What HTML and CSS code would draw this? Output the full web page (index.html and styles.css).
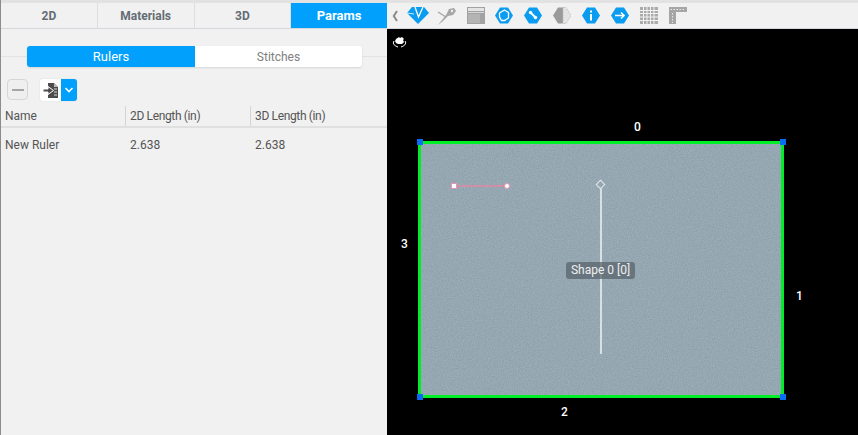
FILE: index.html
```html
<!DOCTYPE html>
<html lang="en">
<head>
  <meta charset="UTF-8">
  <title>Pattern Editor</title>
  <link rel="stylesheet" href="styles.css">
</head>
<body>
  <div class="app">
    <div class="side">
      <div class="tabs">
        <div class="tab">2D</div>
        <div class="tab">Materials</div>
        <div class="tab">3D</div>
        <div class="tab active">Params</div>
      </div>

      <div class="seg-row">
        <div class="seg">
          <div class="seg-item on">Rulers</div>
          <div class="seg-item">Stitches</div>
        </div>
      </div>

      <div class="tools">
        <button class="btn-minus"><span></span></button>
        <div class="split">
          <div class="split-icon">
            <svg width="16" height="17" viewBox="0 0 16 17">
              <path d="M5 1h6l4 4v11H5z" fill="#4c4c4c"/>
              <path d="M11 1l4 4h-4z" fill="#bbb"/>
              <path d="M11 7h3M11 10h3M11 13h3" stroke="#ddd"/>
              <path d="M0 7h5V4.500L10.500 8.500 5 12.500V10H0z" fill="#4c4c4c" stroke="#fff"/>
            </svg>
          </div>
          <div class="split-arrow">
            <svg width="10" height="8" viewBox="0 0 10 8"><path d="M1.500 2l3.500 3.500L8.500 2" fill="none" stroke="#fff" stroke-width="1.600"/></svg>
          </div>
        </div>
      </div>

      <div class="thead">
        <div class="col">Name</div>
        <div class="col">2D Length (in)</div>
        <div class="col">3D Length (in)</div>
      </div>
      <div class="trow">
        <div class="col">New Ruler</div>
        <div class="col">2.638</div>
        <div class="col">2.638</div>
      </div>
    </div>

    <div class="main">
      <div class="toolbar">
        <svg class="ti chev" width="6" height="12" viewBox="0 0 6 12"><path d="M5 1L1.800 6 5 11" fill="none" stroke="#8a8a8a" stroke-width="2"/></svg>
        <svg class="ti t-first" width="22" height="17" viewBox="0 0 22 17"><path d="M5 0h12l5 6-11 11L0 6z" fill="#0a9cf0"/><path d="M8 0l3.500 10L16 0" fill="none" stroke="#fff" stroke-width="1.300"/><path d="M0 6l7 1" stroke="#fff" stroke-width=".8"/></svg>
        <svg class="ti t-needle" width="20" height="18" viewBox="0 0 20 18"><path d="M1 18L9 8l3-6 5-1 2 3-3 4-5 1-5 5z" fill="#a6a6a6"/><path d="M1 5l8 5" stroke="#a6a6a6" stroke-width="1.400"/><circle cx="15" cy="4" r="1.200" fill="#f1f1f1"/></svg>
        <svg class="ti t-win" width="18" height="17" viewBox="0 0 18 17"><rect width="18" height="17" fill="#a2a2a2"/><rect y="1" x="1" width="16" height="3" fill="#e4e4e4"/><rect x="1" y="5" width="16" height="1" fill="#d8d8d8"/><rect x="1" y="7" width="12" height="9" fill="#b4b4b4"/></svg>
        <svg class="ti" width="18" height="17" viewBox="0 0 18 17"><path d="M5 .5h8l5 8-5 8H5l-5-8z" fill="#0a9cf0"/><path d="M4.500 6L9.500 3l4 2.500V11l-4 2.500H6.500L4.500 10z" fill="none" stroke="#fff" stroke-width="1.300"/></svg>
        <svg class="ti" width="18" height="17" viewBox="0 0 18 17"><path d="M5 .5h8l5 8-5 8H5l-5-8z" fill="#0a9cf0"/><path d="M7 6l4 4" stroke="#fff" stroke-width="2"/><circle cx="6.500" cy="5.500" r="1.700" fill="#fff"/><circle cx="11.500" cy="10.500" r="1.700" fill="#fff"/></svg>
        <svg class="ti" width="18" height="17" viewBox="0 0 18 17"><path d="M5 .5h5v16H5l-5-8z" fill="#9a9a9a"/><path d="M10 .5h3l5 8-5 8h-3z" fill="#e4e4e4" stroke="#bdbdbd" stroke-dasharray="1.500 1"/></svg>
        <svg class="ti" width="18" height="17" viewBox="0 0 18 17"><path d="M5 .5h8l5 8-5 8H5l-5-8z" fill="#0a9cf0"/><path d="M9 3.500v2M9 7v6.500" stroke="#fff" stroke-width="2"/></svg>
        <svg class="ti" width="18" height="17" viewBox="0 0 18 17"><path d="M5 .5h8l5 8-5 8H5l-5-8z" fill="#0a9cf0"/><path d="M4 8.500h9M10 5.500l3 3-3 3" fill="none" stroke="#fff" stroke-width="1.600"/></svg>
        <svg class="ti" width="18" height="17" viewBox="0 0 18 17"><rect width="18" height="17" fill="#ababab"/><path d="M3.500 0v17M7 0v17M10.500 0v17M14 0v17M0 3.500h18M0 6.500h18M0 10h18M0 13.500h18" stroke="#f1f1f1"/></svg>
        <svg class="ti" width="18" height="17" viewBox="0 0 18 17"><path d="M0 0h18v5H7v12H0z" fill="#a6a6a6"/><path d="M1.500 2.500h15M3.500 6v10" stroke="#e8e8e8" stroke-dasharray="1.500 1.500"/></svg>
      </div>

      <div class="canvas">
        <svg class="logo" width="15" height="12" viewBox="0 0 15 12">
          <path d="M4 3l3-2 1 1 2-1 2 2-1 1 1 2-2 2H6L4 7 3 5z" fill="#fff"/>
          <path d="M2 5C0 8 3 10 6 11M13 5c2 3-1 5-4 6" fill="none" stroke="#fff"/>
        </svg>
        <div class="edge-label l0">0</div>
        <div class="edge-label l1">1</div>
        <div class="edge-label l2">2</div>
        <div class="edge-label l3">3</div>

        <div class="shape">
          <svg class="linen" width="360" height="251">
            <filter id="weave">
              <feTurbulence type="fractalNoise" baseFrequency="0.8 0.9" numOctaves="2" seed="4"/>
              <feColorMatrix values="0 0 0 0 0  0 0 0 0 0  0 0 0 0 0  .16 0 0 0 -.03"/>
            </filter>
            <rect width="360" height="251" filter="url(#weave)"/>
          </svg>
          <i class="corner tl"></i><i class="corner tr"></i>
          <i class="corner bl"></i><i class="corner br"></i>
          <div class="ruler"><i class="r-start"></i><i class="r-end"></i></div>
          <div class="axis"></div>
          <div class="knob"></div>
          <div class="shape-tag">Shape 0 [0]</div>
        </div>
      </div>
    </div>
  </div>
</body>
</html>
```

FILE: styles.css
```css
*{box-sizing:border-box;margin:0}
html,body{height:100%}
body{font-family:"Roboto","Liberation Sans",sans-serif;background:#000;overflow:hidden}
.app{display:flex;height:435px;width:858px}

/* left panel */
.side{width:387px;background:#f1f1f1;border-left:1px solid #8c8c8c;color:#444;font-size:12px}
.tabs{display:flex;height:29px;background:#f1f1f1;border-top:3px solid #e2e2e2;border-bottom:1px solid #d4d8dc}
.tab{flex:1;display:flex;align-items:center;justify-content:center;font-weight:700;color:#646c74;border-right:1px solid #dedede;font-size:12px}
.tab.active{background:#00a0fc;color:#fff;border-right:0;font-size:13px}

.seg-row{height:27px;margin-top:17px;padding:0 25px 0 26px;background:linear-gradient(#0000 10px,#e3e3e3 10px,#e3e3e3 11px,#0000 11px);background-size:100% 21px;background-repeat:no-repeat}
.seg{display:flex;height:21px;width:335px;border-radius:3px;background:#fff;box-shadow:0 1px 2px rgba(0,0,0,.12);overflow:hidden;font-size:12px}
.seg-item{flex:1;display:flex;align-items:center;justify-content:center;color:#808080}
.seg-item.on{background:#00a0fc;color:#fff;flex:0 0 168px;font-size:13px}

.tools{display:flex;align-items:flex-start;gap:12px;padding:6px 0 0 6px;height:33px}
.btn-minus{width:21px;height:21px;border:1px solid #d6d6d6;border-radius:4px;background:#efefef;display:flex;align-items:center;justify-content:center;padding:0}
.btn-minus span{width:12px;height:2px;background:#a5a5a5}
.split{display:flex;height:22px;width:37px;border-radius:3px;overflow:hidden;box-shadow:0 0 1px rgba(0,0,0,.25)}
.split-icon{width:21px;background:#fff;display:flex;align-items:center;justify-content:center}
.split-arrow{flex:1;background:#00a0fc;display:flex;align-items:center;justify-content:center}

.thead,.trow{display:flex;font-size:12px;color:#555}
.thead{height:22px;border-bottom:2px solid #e0e0e0;align-items:center}
.thead .col{height:20px;line-height:20px;border-left:1px solid #d4d4d4}
.thead .col:first-child{border-left:0}
.thead .col + .col{letter-spacing:-.35px}
.trow{height:33px;align-items:center}
.col{width:125px;padding-left:4px}
.col:first-child{width:124px;padding-left:4px}
.trow .col{padding-left:5px}
.trow .col:first-child{padding-left:4px}

/* right side */
.main{flex:1;display:flex;flex-direction:column}
.toolbar{height:29px;background:#f1f1f1;border-top:3px solid #e2e2e2;border-bottom:1px solid #d4d8dc;display:flex;align-items:center;gap:11px;padding-left:5px}
.ti{flex:none}
.t-first{margin-left:-2px}
.t-needle{margin-left:-3px}
.t-win{margin-left:-1px;margin-right:-1px}

.canvas{position:relative;flex:1;background:#000}
.logo{position:absolute;left:5px;top:7px}
.edge-label{position:absolute;color:#fff;font-size:12px;font-weight:500;line-height:14px}
.l0{left:247px;top:91px}
.l1{left:409px;top:260px}
.l2{left:174px;top:376px}
.l3{left:14px;top:208px}

.shape{position:absolute;left:31px;top:112px;width:366px;height:257px;border:3px solid #00ee28;background-color:#9db0bb}
.linen{position:absolute;left:0;top:0;display:block}
.corner{position:absolute;width:6px;height:6px;background:#0a6cf5}
.tl{left:-4px;top:-5px}
.tr{right:-5px;top:-5px}
.bl{left:-4px;bottom:-5px}
.br{right:-5px;bottom:-5px}

.ruler{position:absolute;left:33px;top:41px;width:53px;height:2px;background:#cf8fa6}
.r-start{position:absolute;left:-3px;top:-2px;width:6px;height:6px;background:#fff;border:1px solid #e795b2}
.r-end{position:absolute;right:-3px;top:-2px;width:6px;height:6px;border-radius:50%;background:#fff;border:1px solid #e795b2}

.axis{position:absolute;left:179px;top:44px;width:2px;height:166px;background:#d8e0e4}
.knob{position:absolute;left:176px;top:37px;width:7px;height:7px;border:1px solid #e6eaec;background:#93a6b2;transform:rotate(45deg)}
.shape-tag{position:absolute;left:145px;top:118px;height:17px;width:69px;border-radius:3px;background:rgba(90,100,108,.75);color:#eef0f1;font-size:12px;line-height:17px;text-align:center}
```
